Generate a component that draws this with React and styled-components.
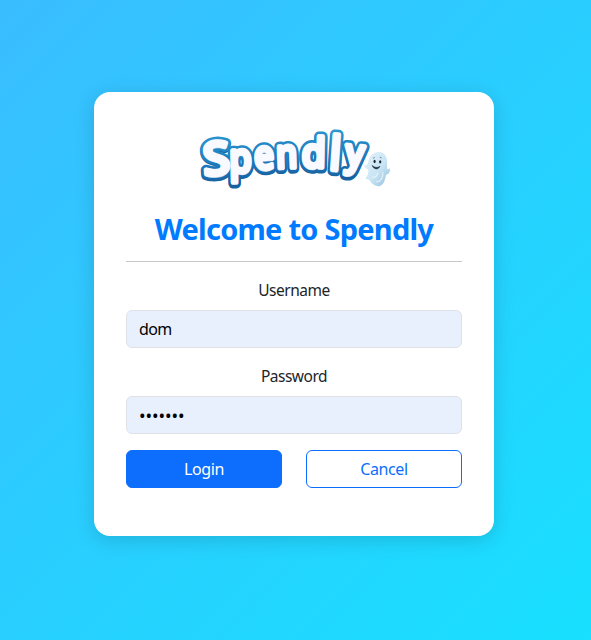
import React from "react";
import styled, { createGlobalStyle } from "styled-components";

const GlobalStyle = createGlobalStyle`
  *, *::before, *::after { box-sizing: border-box; }
  body {
    margin: 0;
    font-family: "Noto Sans", "Open Sans", sans-serif;
    font-size: 16px;
    line-height: 24px;
    color: #212529;
  }
`;

const Page = styled.main`
  display: flex;
  align-items: center;
  justify-content: center;
  height: 100vh;
  padding: 0 3px 12px 0;
  background: linear-gradient(135deg, #3abdff, #18e0ff);
`;

const Card = styled.form`
  display: flex;
  flex-direction: column;
  width: 400px;
  height: 444px;
  padding: 32px;
  border-radius: 16px;
  background: #fff;
  text-align: center;
  box-shadow: 0 4px 20px rgba(0, 0, 0, 0.15);
`;

const LogoArt = styled.svg`
  display: block;
  width: 200px;
  height: 72px;
  margin: 0 auto;
  overflow: visible;
`;

const Glyph = styled.text`
  font-family: "Noto Sans", sans-serif;
  font-weight: 500;
  stroke-linejoin: round;
  stroke-linecap: round;
`;

const Title = styled.h1`
  margin: 15px 0 0;
  font-size: 29px;
  line-height: 36px;
  font-weight: 700;
  color: #007bff;
  white-space: nowrap;
  letter-spacing: -0.75px;
`;

const Divider = styled.hr`
  width: 100%;
  height: 1px;
  margin: 14px 0 16px;
  border: 0;
  background: #c7c8ca;
`;

const Field = styled.div`
  display: flex;
  flex-direction: column;
  gap: 8px;
  margin-bottom: 16px;
`;

const Label = styled.label`
  font-size: 15.5px;
  line-height: 24px;
  letter-spacing: -0.5px;
`;

const Input = styled.input`
  width: 100%;
  height: 38px;
  padding: 6px 12px;
  border: 1px solid #dee2e6;
  border-radius: 6px;
  background: #e8f0fe;
  color: #000;
  font: inherit;
  letter-spacing: -0.6px;
  outline: 0;

  &[type="password"] {
    font-size: 17.5px;
    letter-spacing: -0.1px;
  }
`;

const Actions = styled.div`
  display: grid;
  grid-template-columns: 1fr 1fr;
  gap: 24px;
`;

const Button = styled.button`
  height: 38px;
  padding: 0;
  border: 1px solid #0d6efd;
  border-radius: 6px;
  background: ${(p) => (p.$outline ? "#fff" : "#0d6efd")};
  color: ${(p) => (p.$outline ? "#0d6efd" : "#fff")};
  font: inherit;
  letter-spacing: -0.4px;
`;

const LETTERS = [
  { c: "S", x: 10, y: 51.5, size: 46, sx: 1.06, r: -4 },
  { c: "p", x: 35.5, y: 48.5, size: 41, sx: 0.88, r: -1 },
  { c: "e", x: 61, y: 45.5, size: 40, sx: 0.86, r: -4 },
  { c: "n", x: 82.5, y: 44, size: 40, sx: 0.84, r: -2 },
  { c: "d", x: 107.5, y: 43, size: 41, sx: 0.94, r: 1 },
  { c: "l", x: 134.5, y: 45.5, size: 47, sx: 0.9, r: 4 },
  { c: "y", x: 150.5, y: 41, size: 38, sx: 0.93, r: 5 },
];

function Word({ fill, width, dy = 0 }) {
  return LETTERS.map(({ c, x, y, size, sx, r }) => (
    <Glyph
      key={c}
      transform={`translate(${x} ${y + dy}) rotate(${r}) scale(${sx} 1)`}
      fontSize={size}
      fill={fill}
      stroke={fill}
      strokeWidth={width}
    >
      {c}
    </Glyph>
  ));
}

function Logo() {
  return (
    <LogoArt viewBox="0 0 200 72" aria-label="Spendly">
      <defs>
        <linearGradient id="ghost" x1="0" y1="0" x2="1" y2="1">
          <stop offset="0" stopColor="#e4f3fb" />
          <stop offset="0.55" stopColor="#c9e4f4" />
          <stop offset="1" stopColor="#8fbedb" />
        </linearGradient>
        <linearGradient id="rim" gradientUnits="userSpaceOnUse" x1="0" y1="-40" x2="0" y2="12">
          <stop offset="0" stopColor="#2a96cf" />
          <stop offset="0.55" stopColor="#1f7bbd" />
          <stop offset="1" stopColor="#175f9f" />
        </linearGradient>
      </defs>
      <Word fill="#17659f" width={9.4} dy={1.6} />
      <Word fill="url(#rim)" width={9.8} dy={0.2} />
      <Word fill="#c3d5ea" width={4.2} dy={0.6} />
      <Word fill="#f9faff" width={4.1} />
      <path
        d="M174 39C175 32 179 28 185 28C191 28 194 34 193 41C193 45 193 47 196 44C196 48 195 50 192 51C191 56 190 60 186 62C182 63 178 60 176 57C175 55 173 55 171 55C174 52 175 48 174 45C172 45 170 43 170 41C171 42 173 41 174 39Z"
        fill="url(#ghost)"
      />
      <path d="M182 58C187 58 189 54 189 48M178 53C181 54 183 52 184 49" fill="none" stroke="#f1faff" strokeWidth="1.2" opacity="0.7" />
      <ellipse cx="180.6" cy="37.4" rx="1.1" ry="1.6" fill="#17242f" />
      <ellipse cx="186.2" cy="37.8" rx="1.1" ry="1.6" fill="#17242f" />
      <path d="M179 34.4L180.7 33.4M185.8 33.2L187.6 33.8" stroke="#4b6170" strokeWidth="0.7" />
      <path d="M178 41.2C180.5 43.8 184 44 186 42C184.8 46.3 179.6 46 178 41.2Z" fill="#20313d" stroke="#20313d" strokeWidth="0.4" />
    </LogoArt>
  );
}

export default function App() {
  return (
    <>
      <GlobalStyle />
      <Page>
        <Card onSubmit={(e) => e.preventDefault()}>
          <Logo />
          <Title>Welcome to Spendly</Title>
          <Divider />
          <Field>
            <Label htmlFor="username">Username</Label>
            <Input id="username" defaultValue="dom" />
          </Field>
          <Field>
            <Label htmlFor="password">Password</Label>
            <Input id="password" type="password" defaultValue="spendly" />
          </Field>
          <Actions>
            <Button type="submit">Login</Button>
            <Button type="button" $outline>Cancel</Button>
          </Actions>
        </Card>
      </Page>
    </>
  );
}
